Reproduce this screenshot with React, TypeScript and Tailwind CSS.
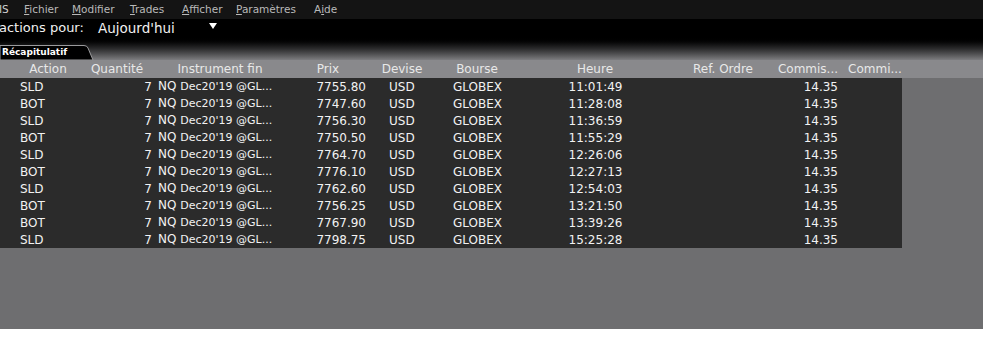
import React from "react";

const rows = [
  ["SLD", "7755.80", "11:01:49"],
  ["BOT", "7747.60", "11:28:08"],
  ["SLD", "7756.30", "11:36:59"],
  ["BOT", "7750.50", "11:55:29"],
  ["SLD", "7764.70", "12:26:06"],
  ["BOT", "7776.10", "12:27:13"],
  ["SLD", "7762.60", "12:54:03"],
  ["BOT", "7756.25", "13:21:50"],
  ["BOT", "7767.90", "13:39:26"],
  ["SLD", "7798.75", "15:25:28"],
];

const headers: [string, string][] = [
  ["Action", "w-[80px]"],
  ["Quantité", "w-[58px]"],
  ["Instrument fin", "w-[148px]"],
  ["Prix", "w-[68px]"],
  ["Devise", "w-[80px]"],
  ["Bourse", "w-[70px]"],
  ["Heure", "w-[166px]"],
  ["Ref. Ordre", "w-[90px]"],
  ["Commis...", "w-[80px]"],
  ["Commi...", "w-[54px]"],
];

export default function App() {
  return (
    <div
      className="w-[983px] h-[357px] bg-white overflow-hidden"
      style={{ fontFamily: '"DejaVu Sans", Verdana, sans-serif' }}
    >
      {/* menu bar */}
      <div className="h-[19px] bg-[#141414] flex items-center text-[10.5px] text-[#b9b9b9] whitespace-nowrap">
        <div className="w-[25px] shrink-0 -ml-[1px] text-[#d2d2d2]">IS</div>
        <div className="w-[48px] shrink-0"><span className="underline">F</span>ichier</div>
        <div className="w-[58px] shrink-0"><span className="underline">M</span>odifier</div>
        <div className="w-[52px] shrink-0"><span className="underline">T</span>rades</div>
        <div className="w-[54px] shrink-0"><span className="underline">A</span>fficher</div>
        <div className="w-[78px] shrink-0"><span className="underline">P</span>aramètres</div>
        <div className="shrink-0">A<span className="underline">i</span>de</div>
      </div>
      {/* filter bar */}
      <div className="h-[18px] bg-black flex items-center text-[13px] text-[#f0f0f0] whitespace-nowrap">
        <div className="w-[99px] shrink-0 -ml-[1px]">actions pour:</div>
        <div className="w-[110px] shrink-0 text-[13.5px]">Aujourd'hui</div>
        <svg className="-mt-[4px]" width="10" height="7" viewBox="0 0 10 7">
          <polygon points="1,0 9,0 5,6" fill="#ffffff" />
        </svg>
      </div>
      {/* tab strip */}
      <div className="h-[23px] bg-gradient-to-b from-[#000000] via-[#2a2a2b] to-[#7d7d80] flex items-end">
        <div className="relative h-[15px] w-[96px]">
          <svg className="absolute inset-0" width="96" height="15" viewBox="0 0 96 15">
            <path d="M0,0.5 L84,0.5 Q87,0.5 88,3 L93,15 L0,15 Z" fill="#000" stroke="#9a9a9c" strokeWidth="1" />
          </svg>
          <span className="relative block pl-[2px] pt-[1px] text-[9px] font-bold text-white leading-[13px]">
            Récapitulatif
          </span>
        </div>
      </div>
      {/* header row */}
      <div className="h-[18px] bg-[#89898c] flex items-center pl-[8px] text-[12px] text-[#e8e8e8] whitespace-nowrap">
        {headers.map(([t, w], i) => (
          <div key={i} className={`${w} text-center shrink-0`}>
            {t}
          </div>
        ))}
      </div>
      {/* body */}
      <div className="h-[251px] bg-[#6e6e70] flex flex-col">
        <div className="w-[902px] bg-[#2b2b2b] text-[12px] text-[#f2f2f2] whitespace-nowrap">
          {rows.map(([a, p, h], i) => (
            <div key={i} className="h-[17px] flex items-center pl-[20px]">
              <div className="w-[60px] shrink-0">{a}</div>
              <div className="w-[72px] shrink-0 text-right">7</div>
              <div className="w-[148px] shrink-0 pl-[6px]">
                NQ <span className="text-[11px]">Dec20'19 @GL...</span>
              </div>
              <div className="w-[66px] shrink-0 text-right">{p}</div>
              <div className="w-[87px] shrink-0 pl-[23px]">USD</div>
              <div className="w-[87px] shrink-0">GLOBEX</div>
              <div className="w-[111px] shrink-0 text-center">{h}</div>
              <div className="w-[119px] shrink-0"></div>
              <div className="w-[68px] shrink-0 text-right">14.35</div>
            </div>
          ))}
        </div>
      </div>
    </div>
  );
}
